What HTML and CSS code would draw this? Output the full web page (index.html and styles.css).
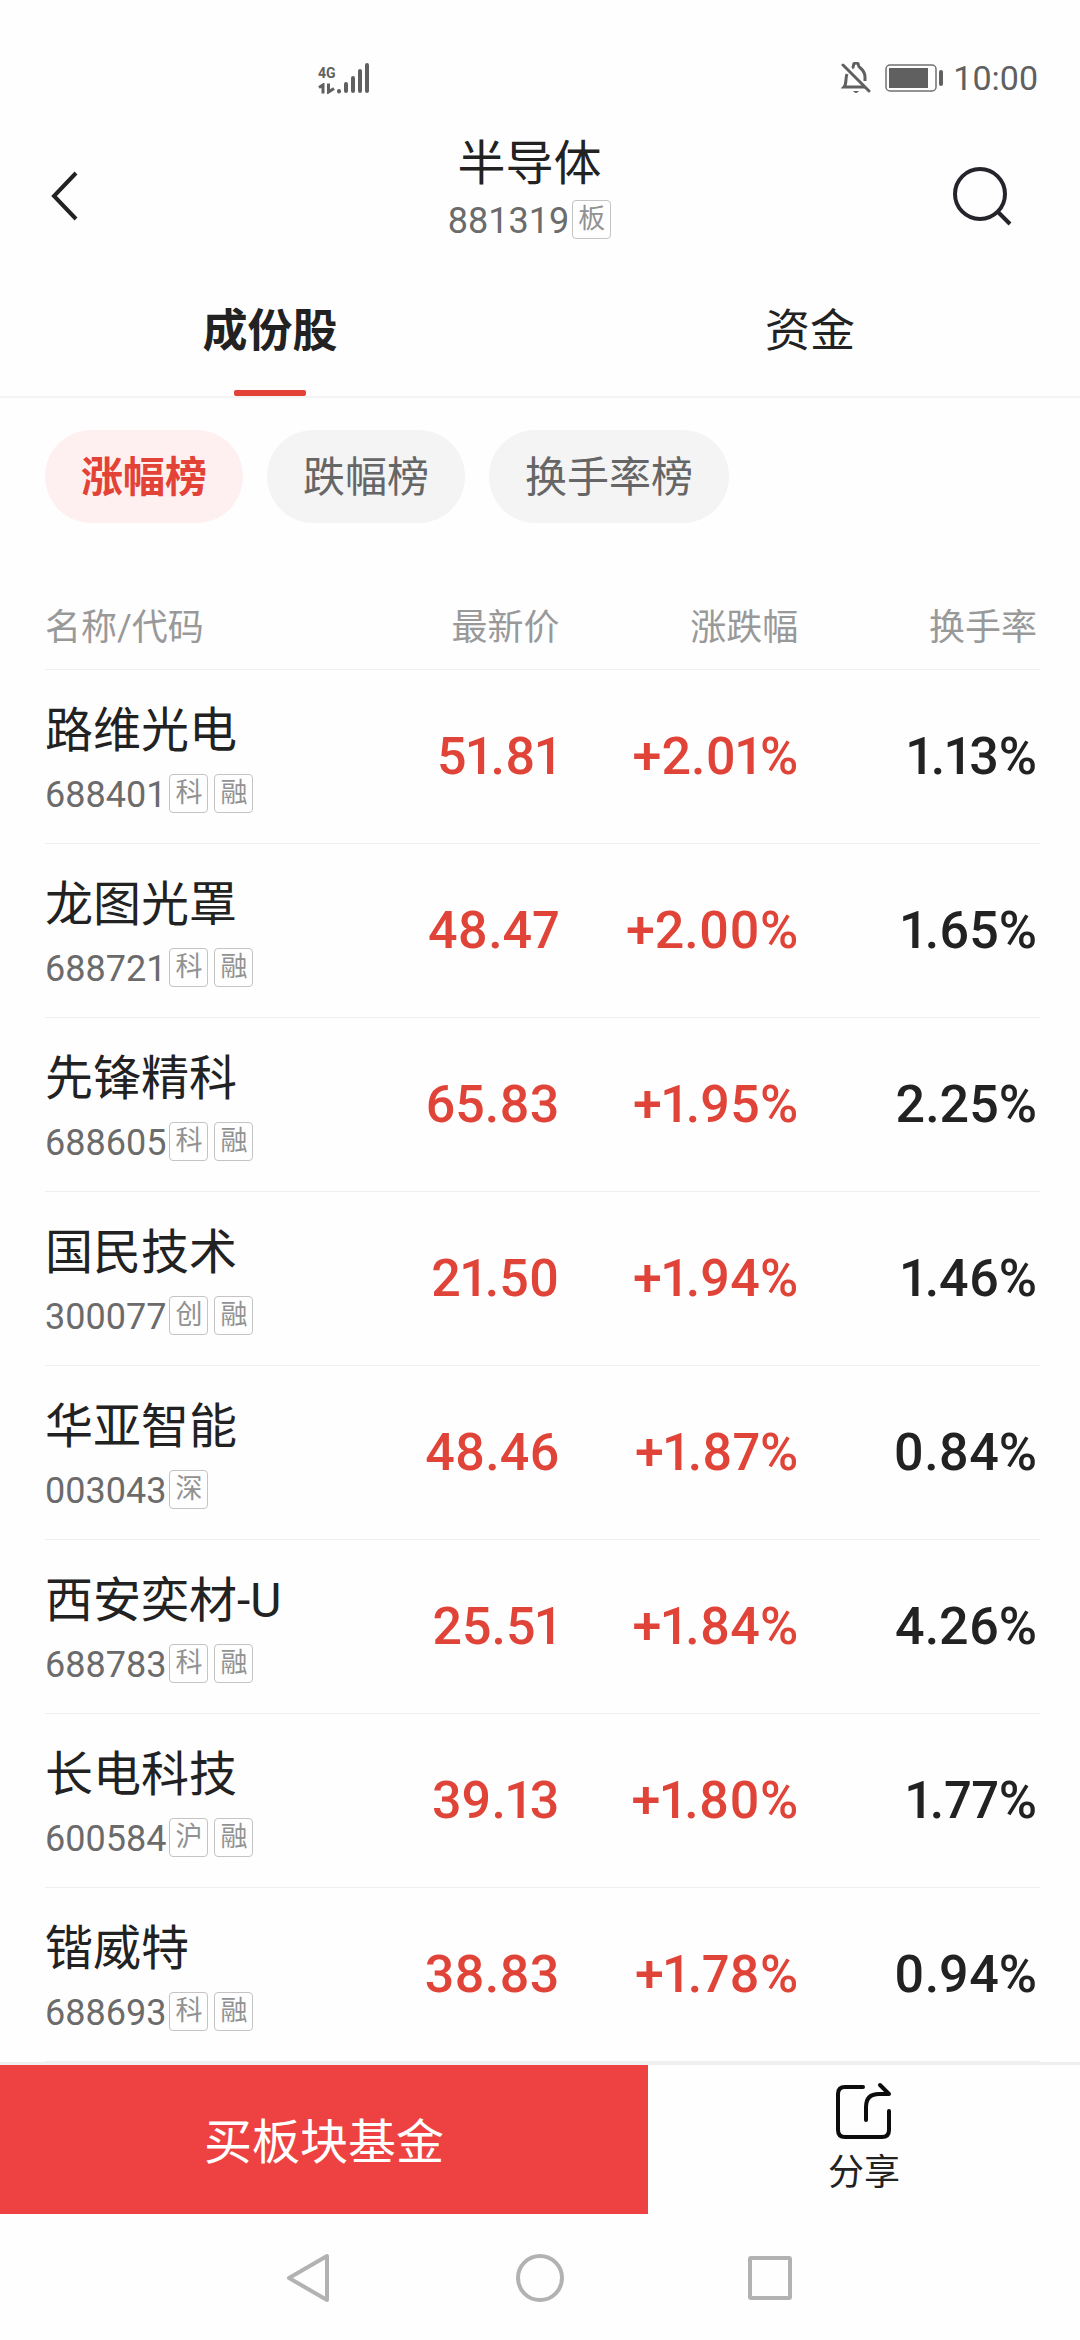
FILE: index.html
```html
<!DOCTYPE html>
<html lang="zh-CN">
<head>
  <meta charset="UTF-8">
  <title>半导体 881319</title>
  <meta name="viewport" content="width=device-width, initial-scale=1">
  <link rel="stylesheet" href="styles.css">
</head>
<body>
  <div class="status-bar">
    <div class="signal">
      <div class="network">
        <span>4G</span>
        <svg width="17" height="11" viewBox="0 0 17 11"><path d="M1 4.500L5 2V10.500M10.500 .5V9L16 5.500" fill="none" stroke="#606060" stroke-width="3"/></svg>
      </div>
      <svg width="34" height="32" viewBox="0 0 34 32" fill="none" stroke="#606060" stroke-width="4" stroke-linecap="round"><path d="M3 29v.5M10 22v7M17 16v13M24 9v20M31 3v26"/></svg>
    </div>
    <div class="status-right">
      <svg width="30" height="32" viewBox="0 0 30 32" fill="none" stroke="#606060" stroke-width="3">
        <path d="M6 12C4 17 6 22 3 25H24M11 6C12 5.500 12.500 5 12.500 3.500A2.500 2.500 0 0 1 17.500 3.500C17.500 6 24 7 24 15V19"/>
        <path d="M2 3L28 29" stroke-linecap="round"/>
        <path d="M12 29H18Q15 33 12 29Z" fill="#606060" stroke="none"/>
      </svg>
      <svg width="58" height="28" viewBox="0 0 58 28"><rect x="1" y="1" width="50" height="26" rx="4" fill="none" stroke="#707070" stroke-width="1.500"/><rect x="4" y="4" width="39" height="20" fill="#606060"/><rect x="54" y="6" width="4" height="16" rx="2" fill="#606060"/></svg>
      <span class="time">10:00</span>
    </div>
  </div>

  <header class="header">
    <button class="back" aria-label="返回">
      <svg width="28" height="50" viewBox="0 0 28 50"><path d="M26 2L4 25L26 48" fill="none" stroke="#222" stroke-width="4"/></svg>
    </button>
    <div class="heading">
      <h1>半导体</h1>
      <div class="code">881319<span class="tag">板</span></div>
    </div>
    <button class="search" aria-label="搜索">
      <svg width="60" height="60" viewBox="0 0 60 60" fill="none" stroke="#24242b" stroke-width="4"><circle cx="28" cy="28" r="25"/><path d="M46 46L58 58"/></svg>
    </button>
  </header>

  <nav class="tabs">
    <button class="tab active">成份股</button>
    <button class="tab">资金</button>
  </nav>

  <main>
    <div class="chips">
      <button class="chip active">涨幅榜</button>
      <button class="chip">跌幅榜</button>
      <button class="chip">换手率榜</button>
    </div>

    <table class="stocks">
      <thead>
        <tr><th class="col-name">名称/代码</th><th>最新价</th><th>涨跌幅</th><th>换手率</th></tr>
      </thead>
      <tbody>
        <tr>
          <td><div class="name">路维光电</div><div class="code">688401<span class="tag">科</span><span class="tag">融</span></div></td>
          <td class="up">51.81</td><td class="up">+2.01%</td><td>1.13%</td>
        </tr>
        <tr>
          <td><div class="name">龙图光罩</div><div class="code">688721<span class="tag">科</span><span class="tag">融</span></div></td>
          <td class="up">48.47</td><td class="up">+2.00%</td><td>1.65%</td>
        </tr>
        <tr>
          <td><div class="name">先锋精科</div><div class="code">688605<span class="tag">科</span><span class="tag">融</span></div></td>
          <td class="up">65.83</td><td class="up">+1.95%</td><td>2.25%</td>
        </tr>
        <tr>
          <td><div class="name">国民技术</div><div class="code">300077<span class="tag">创</span><span class="tag">融</span></div></td>
          <td class="up">21.50</td><td class="up">+1.94%</td><td>1.46%</td>
        </tr>
        <tr>
          <td><div class="name">华亚智能</div><div class="code">003043<span class="tag">深</span></div></td>
          <td class="up">48.46</td><td class="up">+1.87%</td><td>0.84%</td>
        </tr>
        <tr>
          <td><div class="name">西安奕材-U</div><div class="code">688783<span class="tag">科</span><span class="tag">融</span></div></td>
          <td class="up">25.51</td><td class="up">+1.84%</td><td>4.26%</td>
        </tr>
        <tr>
          <td><div class="name">长电科技</div><div class="code">600584<span class="tag">沪</span><span class="tag">融</span></div></td>
          <td class="up">39.13</td><td class="up">+1.80%</td><td>1.77%</td>
        </tr>
        <tr>
          <td><div class="name">锴威特</div><div class="code">688693<span class="tag">科</span><span class="tag">融</span></div></td>
          <td class="up">38.83</td><td class="up">+1.78%</td><td>0.94%</td>
        </tr>
      </tbody>
    </table>
  </main>

  <footer class="actions">
    <button class="buy">买板块基金</button>
    <button class="share">
      <svg width="58" height="58" viewBox="0 0 58 58" fill="none" stroke="#0c0c0c" stroke-width="4" stroke-linecap="round" stroke-linejoin="round">
        <path d="M28 5H10Q3 5 3 12V48Q3 55 10 55H47Q54 55 54 48V29"/>
        <path d="M31 38V25Q31 12 44 12H54L45 3"/>
      </svg>
      <span>分享</span>
    </button>
  </footer>

  <div class="system-nav">
    <button aria-label="后退"><svg width="50" height="50" viewBox="0 0 50 50"><path d="M43 3V47L5 25Z"/></svg></button>
    <button aria-label="主屏幕"><svg width="50" height="50" viewBox="0 0 50 50"><circle cx="25" cy="25" r="22"/></svg></button>
    <button aria-label="最近任务"><svg width="50" height="50" viewBox="0 0 50 50"><rect x="4" y="5" width="40" height="40" rx="1"/></svg></button>
  </div>
</body>
</html>
```
FILE: styles.css
```css
* {
  box-sizing: border-box;
}
body {
  margin: 0;
  min-height: 100vh;
  display: flex;
  flex-direction: column;
  background: #fefefe;
  color: #222;
  font-family: Roboto, "Noto Sans CJK SC", sans-serif;
}
button {
  padding: 0;
  border: none;
  background: none;
  color: inherit;
  font-family: inherit;
  cursor: pointer;
}
svg {
  display: block;
}

/* status bar */
.status-bar {
  display: flex;
  justify-content: space-between;
  align-items: center;
  padding: 56px 42px 0 318px;
  color: #606060;
}
.signal {
  display: flex;
  align-items: flex-end;
}
.network {
  font-size: 14px;
  font-weight: 700;
  line-height: 20px;
}
.status-right {
  display: flex;
  align-items: center;
  gap: 14px;
}
.time {
  font-size: 34px;
  line-height: 44px;
  margin-left: -4px;
}

/* header */
.header {
  display: flex;
  align-items: center;
  padding-top: 30px;
}
.heading {
  flex: 1;
  display: flex;
  flex-direction: column;
  align-items: center;
  gap: 2px;
}
.heading h1 {
  margin: 0;
  font-size: 48px;
  line-height: 68px;
  font-weight: 400;
}
.back {
  width: 112px;
  padding: 18px 0 0 50px;
}
.search {
  width: 133px;
  padding: 18px 0 0 5px;
}
.code {
  display: flex;
  align-items: flex-start;
  gap: 3px;
  font-size: 36px;
  line-height: 43px;
  color: #6b6b6b;
}
.tag {
  width: 39px;
  height: 39px;
  border: 1px solid #c4c4c4;
  border-radius: 4px;
  font-size: 27px;
  line-height: 37px;
  text-align: center;
  color: #929292;
}
.tag + .tag {
  margin-left: 3px;
}

/* tabs */
.tabs {
  display: flex;
  margin-top: 22px;
  border-bottom: 2px solid #f4f4f4;
}
.tab {
  flex: 1;
  display: flex;
  flex-direction: column;
  align-items: center;
  padding-top: 34px;
  height: 131px;
  font-size: 45px;
  line-height: 66px;
}
.tab.active {
  font-weight: 700;
}
.tab.active::after {
  content: "";
  width: 72px;
  height: 6px;
  margin-top: auto;
  border-radius: 2px;
  background: #e34236;
}

/* ranking filters */
main {
  flex: 1;
  padding: 32px 40px 0 45px;
}
.chips {
  display: flex;
  gap: 24px;
}
.chip {
  padding: 3px 36px 0;
  border-radius: 47px;
  background: #f4f4f4;
  color: #666;
  font-size: 42px;
  line-height: 90px;
}
.chip.active {
  background: #fef0f0;
  color: #e34236;
  font-weight: 700;
}

/* stock list */
.stocks {
  width: 100%;
  margin-top: 78px;
  table-layout: fixed;
  border-collapse: separate;
  border-spacing: 0;
}
.stocks th {
  padding: 0 3px 14px 0;
  border-bottom: 1px solid #efefef;
  font-size: 36px;
  line-height: 54px;
  font-weight: 400;
  text-align: right;
  color: #999;
}
.stocks th.col-name {
  width: 28%;
  text-align: left;
}
.stocks td {
  height: 174px;
  padding: 0 3px 0 0;
  border-bottom: 1px solid #efefef;
  font-size: 52px;
  font-weight: 500;
  font-variant-numeric: proportional-nums;
  text-align: right;
  white-space: nowrap;
}
.stocks td:first-child {
  font-weight: 400;
  text-align: left;
}
.stocks .up {
  color: #e04438;
}
.name {
  margin-bottom: 9px;
  font-size: 48px;
  line-height: 68px;
}
.stocks .code {
  font-variant-numeric: normal;
}

/* bottom actions */
.actions {
  display: flex;
  border-top: 3px solid #efefef;
}
.buy {
  flex: 3;
  height: 149px;
  padding-bottom: 4px;
  background: #ee4242;
  color: #fff;
  font-size: 48px;
}
.share {
  flex: 2;
  display: flex;
  flex-direction: column;
  align-items: center;
  justify-content: center;
  gap: 8px;
  font-size: 36px;
  line-height: 50px;
}
.system-nav {
  display: grid;
  grid-template-columns: repeat(3, 231px);
  justify-content: center;
  height: 127px;
}
.system-nav svg {
  margin: 0 auto;
  fill: none;
  stroke: #b2b2b2;
  stroke-width: 4;
  stroke-linejoin: round;
}
```
